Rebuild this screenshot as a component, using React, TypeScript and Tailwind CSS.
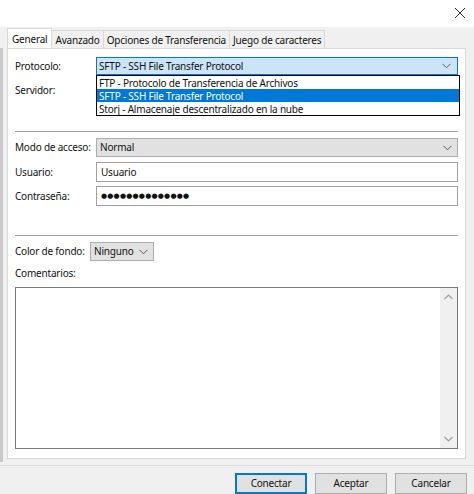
import React from "react";

const Chevron = ({ color = "#606060" }: { color?: string }) => (
  <svg width="9" height="6" viewBox="0 0 9 6" fill="none">
    <path d="M0.5 0.8 L4.5 4.8 L8.5 0.8" stroke={color} strokeWidth="1" />
  </svg>
);

const Arrow = ({ up }: { up?: boolean }) => (
  <svg width="9" height="6" viewBox="0 0 9 6" fill="none">
    <path d={up ? "M0.5 5 L4.5 1 L8.5 5" : "M0.5 1 L4.5 5 L8.5 1"} stroke="#a0a0a0" strokeWidth="1.2" />
  </svg>
);

export default function App() {
  const font = { fontFamily: '"Noto Sans", Lato, sans-serif' };
  return (
    <div className="w-[474px] h-[494px] bg-[#f0f0f0] text-[10px] tracking-[-0.2px] text-[#111] flex flex-col overflow-hidden whitespace-nowrap" style={font}>
      {/* title area */}
      <div className="h-[27px] bg-white flex justify-end items-center pr-[6px] shrink-0">
        <svg width="12" height="12" viewBox="0 0 12 12" className="mr-[2px] mt-[-2px]">
          <path d="M1 1 L11 11 M11 1 L1 11" stroke="#333" strokeWidth="1" />
        </svg>
      </div>
      <div className="flex-1 flex">
        <div className="w-[3px] bg-[#c9c9c9] mt-[21px] mb-[32px]" />
        <div className="flex-1 flex flex-col pl-[4px] pr-[8px]">
          {/* tabs */}
          <div className="flex items-end h-[21px]">
            <div className="h-[20px] px-[4px] bg-white border border-b-0 border-[#d9d9d9] flex items-center leading-none">General</div>
            <div className="h-[18px] px-[3px] border-t border-r border-[#d9d9d9] flex items-center leading-none">Avanzado</div>
            <div className="h-[18px] px-[3px] border-t border-r border-[#d9d9d9] flex items-center leading-none">Opciones de Transferencia</div>
            <div className="h-[18px] px-[3px] border-t border-r border-[#d9d9d9] flex items-center leading-none">Juego de caracteres</div>
          </div>
          {/* panel */}
          <div className="relative h-[411px] bg-white border border-[#d9d9d9] flex flex-col px-[7px]">
            {/* Protocolo */}
            <div className="flex items-center h-[18px] mt-[8px]">
              <div className="w-[81px]">Protocolo:</div>
              <div className="flex-1 h-[18px] bg-[#cce4f7] border border-[#0078d7] flex items-center justify-between pl-[2px] pr-[6px]">
                <span>SFTP - SSH File Transfer Protocol</span>
                <Chevron />
              </div>
            </div>
            {/* Servidor */}
            <div className="flex items-center h-[19px] mt-[6px]">
              <div className="w-[81px]">Servidor:</div>
              <div className="flex-1 h-[19px]" />
            </div>
            <div className="h-px bg-[#a0a0a0] mt-[31px]" />
            {/* Modo */}
            <div className="flex items-center h-[19px] mt-[6px]">
              <div className="w-[81px]">Modo de acceso:</div>
              <div className="flex-1 h-[19px] bg-[#e1e1e1] border border-[#adadad] flex items-center justify-between pl-[3px] pr-[5px]">
                <span>Normal</span>
                <Chevron />
              </div>
            </div>
            <div className="flex items-center h-[20px] mt-[5px]">
              <div className="w-[81px]">Usuario:</div>
              <div className="flex-1 h-[20px] border border-[#a0a0a0] flex items-center pl-[4px]">Usuario</div>
            </div>
            <div className="flex items-center h-[20px] mt-[4px]">
              <div className="w-[81px]">Contraseña:</div>
              <div className="flex-1 h-[20px] border border-[#a0a0a0] flex items-center pl-[4px] text-[7px] tracking-[0.2px]" style={{ fontFamily: '"DejaVu Sans", sans-serif' }}>
                ●●●●●●●●●●●●●●
              </div>
            </div>
            <div className="h-px bg-[#a0a0a0] mt-[29px]" />
            {/* Color de fondo */}
            <div className="flex items-center h-[19px] mt-[6px]">
              <div className="w-[75px]">Color de fondo:</div>
              <div className="w-[64px] h-[19px] bg-[#e1e1e1] border border-[#adadad] flex items-center justify-between pl-[3px] pr-[5px]">
                <span>Ninguno</span>
                <Chevron />
              </div>
            </div>
            <div className="mt-[4px] h-[16px] flex items-center">Comentarios:</div>
            <div className="mt-[6px] h-[162px] border border-[#7a7a7a] flex justify-end">
              <div className="w-[17px] bg-[#f0f0f0] flex flex-col justify-between items-center py-[6px]">
                <Arrow up />
                <Arrow />
              </div>
            </div>
            {/* dropdown overlay */}
            <div className="absolute left-[88px] right-[5px] top-[26px] bg-white border border-black flex flex-col">
              <div className="h-[13px] flex items-center pl-[2px] leading-none">FTP - Protocolo de Transferencia de Archivos</div>
              <div className="h-[13px] flex items-center pl-[2px] leading-none bg-[#0078d7] text-white">SFTP - SSH File Transfer Protocol</div>
              <div className="h-[13px] flex items-center pl-[2px] leading-none">Storj - Almacenaje descentralizado en la nube</div>
            </div>
          </div>
          <div className="h-px bg-[#dcdcdc] mt-[6px] -ml-[7px] -mr-[8px]" />
          {/* buttons */}
          <div className="flex justify-end gap-[8px] mt-[7px] mr-[-1px]">
            <div className="w-[72px] h-[21px] bg-[#e1e1e1] border-2 border-[#0078d7] flex items-center justify-center">Conectar</div>
            <div className="w-[72px] h-[21px] bg-[#e1e1e1] border border-[#adadad] flex items-center justify-center">Aceptar</div>
            <div className="w-[72px] h-[21px] bg-[#e1e1e1] border border-[#adadad] flex items-center justify-center">Cancelar</div>
          </div>
        </div>
      </div>
    </div>
  );
}
